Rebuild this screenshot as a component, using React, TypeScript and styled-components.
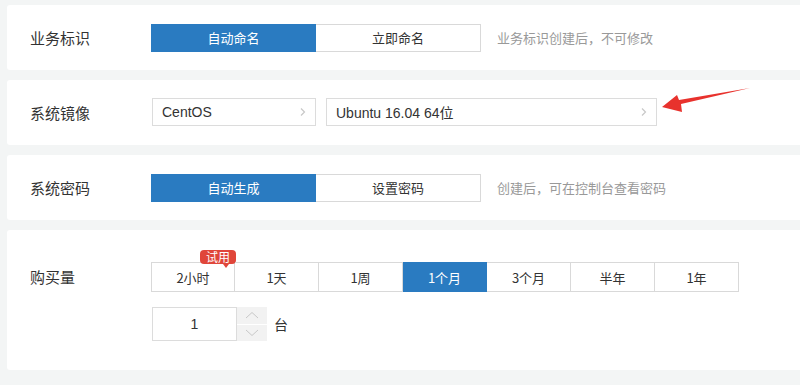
import React from "react";
import styled, { createGlobalStyle } from "styled-components";

const Global = createGlobalStyle`
  html, body { margin: 0; padding: 0; background: #f3f5f5; }
  body { font-family: "Liberation Sans", "Noto Sans CJK SC", sans-serif; color: #333; }
  * { box-sizing: border-box; }
`;

const Page = styled.div`
  position: relative;
  width: 800px;
  height: 385px;
  padding: 5px 0 0 7px;
  display: flex;
  flex-direction: column;
  gap: 10px;
  overflow: hidden;
`;

const Card = styled.section<{ $h: number }>`
  background: #fff;
  border-radius: 3px;
  width: 800px;
  height: ${(p) => p.$h}px;
  display: flex;
  align-items: ${(p) => (p.$h > 100 ? "flex-start" : "center")};
  padding: ${(p) => (p.$h > 100 ? "32px 0 0 23px" : "0 0 0 23px")};
`;

const Label = styled.div`
  width: 121px;
  flex: none;
  font-size: 15px;
  color: #333;
  font-family: "Noto Sans CJK SC", sans-serif;
  line-height: 30px;
`;

const Controls = styled.div`
  display: flex;
  align-items: center;
  gap: 16px;
`;

const Segment = styled.div`
  display: flex;
`;

const SegBtn = styled.div<{ $active?: boolean }>`
  width: 165px;
  height: 28px;
  display: flex;
  align-items: center;
  justify-content: center;
  font-size: 13px;
  font-family: "Noto Sans CJK SC", sans-serif;
  background: ${(p) => (p.$active ? "#2a7bc1" : "#fff")};
  color: ${(p) => (p.$active ? "#fff" : "#333")};
  border: 1px solid ${(p) => (p.$active ? "#2a7bc1" : "#d9d9d9")};
  & + & { border-left: none; }
`;

const Hint = styled.span`
  font-size: 13px;
  color: #999;
  font-family: "Noto Sans CJK SC", sans-serif;
`;

const SelectRow = styled.div`
  display: flex;
  gap: 10px;
  margin-left: 1px;
  margin-top: -2px;
`;

const Select = styled.div<{ $w: number }>`
  width: ${(p) => p.$w}px;
  height: 28px;
  border: 1px solid #dcdcdc;
  display: flex;
  align-items: center;
  justify-content: space-between;
  padding: 0 8px 0 9px;
  font-size: 14px;
  color: #333;
`;

const Chevron = () => (
  <svg width="8" height="10" viewBox="0 0 8 10">
    <path d="M2 1.5 L5.5 5 L2 8.5" fill="none" stroke="#c8c8c8" strokeWidth="1.2" />
  </svg>
);

const Column = styled.div`
  display: flex;
  flex-direction: column;
  gap: 15px;
`;

const Tabs = styled.div`
  display: flex;
`;

const Tab = styled.div<{ $active?: boolean }>`
  position: relative;
  width: 84px;
  height: 30px;
  display: flex;
  align-items: center;
  justify-content: center;
  font-size: 13px;
  font-family: "Noto Sans CJK SC", sans-serif;
  background: ${(p) => (p.$active ? "#2a7bc1" : "#fff")};
  color: ${(p) => (p.$active ? "#fff" : "#333")};
  border: 1px solid ${(p) => (p.$active ? "#2a7bc1" : "#d9d9d9")};
  & + & { border-left: none; }
`;

const Badge = styled.span`
  position: absolute;
  left: 48px;
  top: -13px;
  width: 36px;
  height: 14px;
  background: #e0463a;
  color: #fff;
  border-radius: 4px;
  font-size: 12px;
  line-height: 14px;
  text-align: center;
  font-family: "Noto Sans CJK SC", sans-serif;
  &::after {
    content: "";
    position: absolute;
    left: 23px;
    bottom: -4px;
    border-left: 3px solid transparent;
    border-right: 3px solid transparent;
    border-top: 4px solid #e0463a;
  }
`;

const Qty = styled.div`
  display: flex;
  align-items: center;
  margin-left: 1px;
`;

const NumBox = styled.div`
  width: 85px;
  height: 34px;
  border: 1px solid #dcdcdc;
  display: flex;
  align-items: center;
  justify-content: center;
  font-size: 14px;
  color: #333;
`;

const Spinner = styled.div`
  display: flex;
  flex-direction: column;
  gap: 1px;
  height: 34px;
`;

const SpinBtn = styled.div`
  width: 30px;
  height: 16.5px;
  background: #f2f2f2;
  display: flex;
  align-items: center;
  justify-content: center;
`;

const Unit = styled.span`
  margin-left: 7px;
  font-size: 14px;
  font-family: "Noto Sans CJK SC", sans-serif;
  color: #333;
`;

const Arrow = styled.svg`
  position: absolute;
  left: 655px;
  top: 82px;
`;

export default function App() {
  const periods = ["2小时", "1天", "1周", "1个月", "3个月", "半年", "1年"];
  return (
    <>
      <Global />
      <Page>
        <Card $h={65}>
          <Label>业务标识</Label>
          <Controls>
            <Segment>
              <SegBtn $active>自动命名</SegBtn>
              <SegBtn>立即命名</SegBtn>
            </Segment>
            <Hint>业务标识创建后，不可修改</Hint>
          </Controls>
        </Card>
        <Card $h={65}>
          <Label>系统镜像</Label>
          <SelectRow>
            <Select $w={164}>
              <span>CentOS</span>
              <Chevron />
            </Select>
            <Select $w={331}>
              <span>Ubuntu 16.04 64位</span>
              <Chevron />
            </Select>
          </SelectRow>
        </Card>
        <Card $h={65}>
          <Label>系统密码</Label>
          <Controls>
            <Segment>
              <SegBtn $active>自动生成</SegBtn>
              <SegBtn>设置密码</SegBtn>
            </Segment>
            <Hint>创建后，可在控制台查看密码</Hint>
          </Controls>
        </Card>
        <Card $h={140}>
          <Label>购买量</Label>
          <Column>
            <Tabs>
              {periods.map((p, i) => (
                <Tab key={p} $active={i === 3}>
                  {i === 0 && <Badge>试用</Badge>}
                  {p}
                </Tab>
              ))}
            </Tabs>
            <Qty>
              <NumBox>1</NumBox>
              <Spinner>
                <SpinBtn>
                  <svg width="14" height="8" viewBox="0 0 14 8">
                    <path d="M1 7 L7 1.5 L13 7" fill="none" stroke="#c8c8c8" strokeWidth="1" />
                  </svg>
                </SpinBtn>
                <SpinBtn>
                  <svg width="14" height="8" viewBox="0 0 14 8">
                    <path d="M1 1 L7 6.5 L13 1" fill="none" stroke="#c8c8c8" strokeWidth="1" />
                  </svg>
                </SpinBtn>
              </Spinner>
              <Unit>台</Unit>
            </Qty>
          </Column>
        </Card>
        <Arrow width="100" height="40" viewBox="0 0 100 40">
          <path d="M7 25 L22 13 L24 18 L95 6 L26 22 L27 30 Z" fill="#e8322d" />
        </Arrow>
      </Page>
    </>
  );
}
